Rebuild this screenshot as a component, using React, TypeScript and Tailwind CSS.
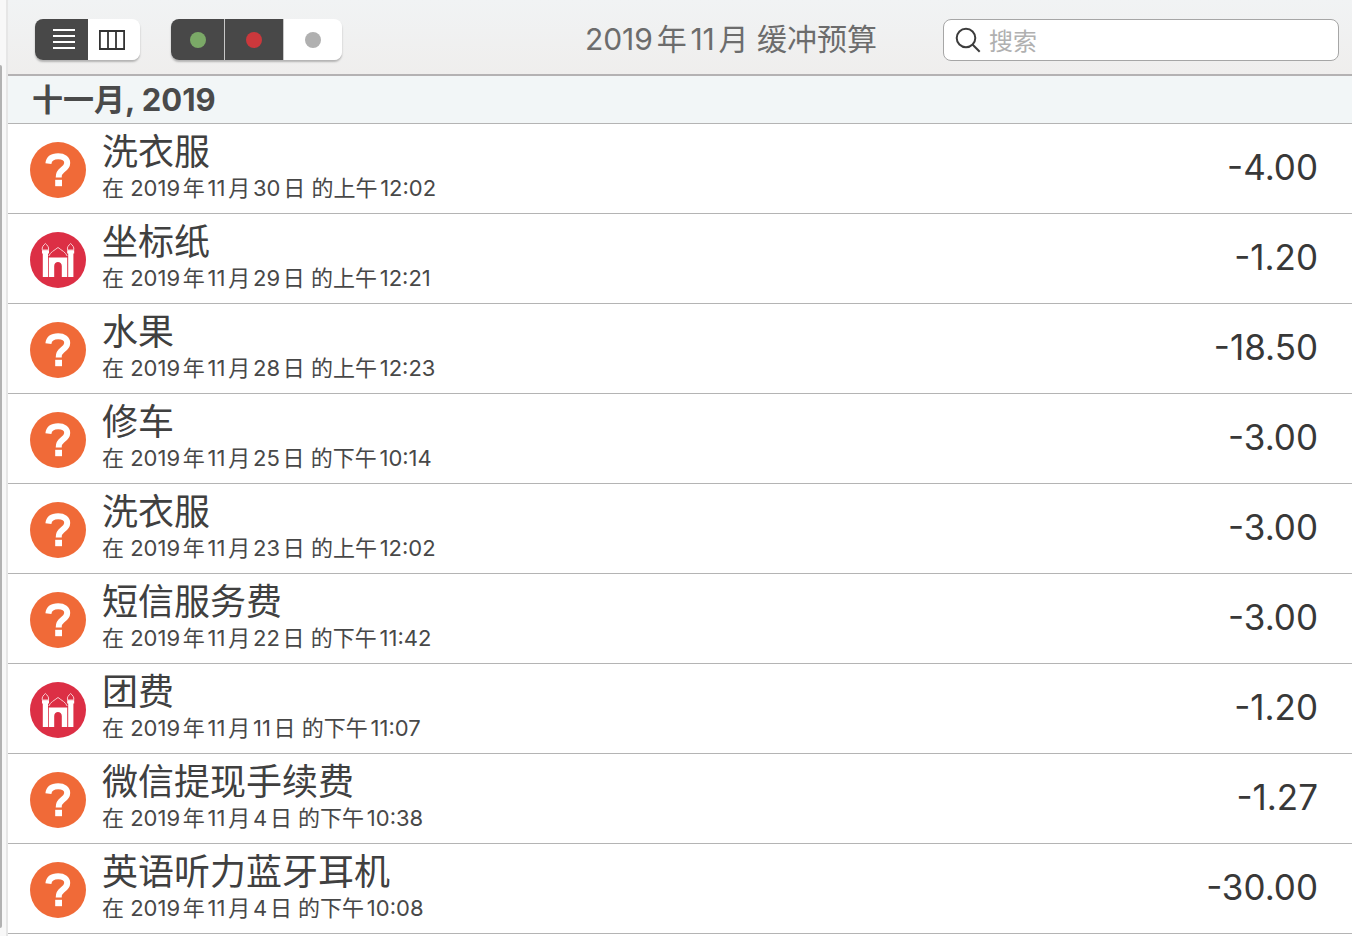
import { useState } from "react";

type Kind = "unknown" | "education";

interface Entry {
  id: number;
  kind: Kind;
  title: string;
  date: string;
  amount: string;
}

const entries: Entry[] = [
  { id: 1, kind: "unknown", title: "洗衣服", date: "在 2019年11月30日 的上午12:02", amount: "-4.00" },
  { id: 2, kind: "education", title: "坐标纸", date: "在 2019年11月29日 的上午12:21", amount: "-1.20" },
  { id: 3, kind: "unknown", title: "水果", date: "在 2019年11月28日 的上午12:23", amount: "-18.50" },
  { id: 4, kind: "unknown", title: "修车", date: "在 2019年11月25日 的下午10:14", amount: "-3.00" },
  { id: 5, kind: "unknown", title: "洗衣服", date: "在 2019年11月23日 的上午12:02", amount: "-3.00" },
  { id: 6, kind: "unknown", title: "短信服务费", date: "在 2019年11月22日 的下午11:42", amount: "-3.00" },
  { id: 7, kind: "education", title: "团费", date: "在 2019年11月11日 的下午11:07", amount: "-1.20" },
  { id: 8, kind: "unknown", title: "微信提现手续费", date: "在 2019年11月4日 的下午10:38", amount: "-1.27" },
  { id: 9, kind: "unknown", title: "英语听力蓝牙耳机", date: "在 2019年11月4日 的下午10:08", amount: "-30.00" },
];

function QuestionIcon() {
  return (
    <svg viewBox="0 0 56 56" className="size-14 shrink-0" aria-hidden="true">
      <circle cx="28" cy="28" r="28" fill="#f06a38" />
      <path
        d="M18.4 21.6C18.9 16.6 22.8 14.3 28.2 14.3C33.8 14.3 37.2 17 37.2 21C37.2 24.4 35 26.2 32.4 28C29.6 30 28.7 31.6 28.7 35.4"
        fill="none"
        stroke="#fff"
        strokeWidth="6"
      />
      <rect x="25.2" y="37.8" width="6.8" height="6.4" fill="#fff" />
    </svg>
  );
}

function CastleIcon() {
  return (
    <svg viewBox="0 0 56 56" className="size-14 shrink-0" aria-hidden="true">
      <circle cx="28" cy="28" r="28" fill="#dc2f45" />
      <g fill="none" stroke="#f9ced3" strokeWidth="1">
        <path d="M12.3 18C11.6 15 13.4 13.4 15.4 11.5C17.4 13.4 19.2 15 18.5 18Z" />
        <path d="M37.5 18C36.8 15 38.6 13.4 40.6 11.5C42.6 13.4 44.4 15 43.7 18Z" />
        <path d="M18.8 24C20.5 20 24 18.7 28 15.5C32 18.7 35.5 20 37.2 24" />
      </g>
      <g fill="#fff">
        <path d="M12 18.2h7v3.3h-1V45h-5.2V21.5H12Z" />
        <path d="M37.2 18.2h7v3.3h-.8V45h-5.2V21.5h-1Z" />
        <path d="M18.8 25.5h18.4V45h-5.4V34c0-5.2-7.6-5.2-7.6 0v11h-5.4Z" />
      </g>
    </svg>
  );
}

function EntryRow({ entry }: { entry: Entry }) {
  return (
    <li className="flex h-[90px] items-center gap-4 border-b border-[#b4b4b4] bg-white pt-[2px] pr-[34px] pl-[22px]">
      {entry.kind === "unknown" ? <QuestionIcon /> : <CastleIcon />}
      <div className="min-w-0 flex-1 pb-2">
        <h3 className="truncate text-[36px] leading-[44px] text-[#404040]">{entry.title}</h3>
        <p className="truncate text-[22px] leading-[28px] text-[#484848]">{entry.date}</p>
      </div>
      <span className="pb-[6px] text-[35px] leading-[44px] text-[#383838]">{entry.amount}</span>
    </li>
  );
}

const statusFilters = [
  { key: "income", label: "收入", dot: "bg-[#7ba967]", width: "w-[54px]" },
  { key: "expense", label: "支出", dot: "bg-[#cb383c]", width: "w-[59px]" },
  { key: "other", label: "其他", dot: "bg-[#b0b0b0]", width: "w-[58px]" },
];

export default function App() {
  const [view, setView] = useState("list");
  const [active, setActive] = useState<string[]>(["income", "expense"]);
  const toggle = (key: string) =>
    setActive((keys) => (keys.includes(key) ? keys.filter((k) => k !== key) : [...keys, key]));
  const tone = (on: boolean) => (on ? "bg-[#484848] text-white" : "bg-white text-[#333]");

  return (
    <div className="flex min-h-screen bg-white font-['Inter','Noto_Sans_CJK_SC',sans-serif] [text-autospace:normal]">
      <div className="flex w-2 shrink-0 border-r-2 border-[#e6e6e6] bg-[#f8f8f8] pt-[65px] pb-2">
        <div className="w-[2px] rounded-r-full bg-[#b2b2b2]" />
      </div>
      <main className="min-w-0 flex-1">
        <header className="flex h-[76px] items-start border-b-2 border-[#b4b2b3] bg-linear-to-b from-[#f1f3f4] to-[#efeeed] pt-[19px] pr-[13px] pl-[27px]">
          <div className="flex h-[41px] w-[105px] overflow-hidden rounded-lg shadow-[0_2px_2px_rgba(0,0,0,0.25)]">
            <button
              aria-label="列表"
              aria-pressed={view === "list"}
              onClick={() => setView("list")}
              className={`flex w-[53px] items-center justify-center pl-1 ${tone(view === "list")}`}
            >
              <svg width="24" height="22" viewBox="0 0 24 22" stroke="currentColor" strokeWidth="2">
                <path d="M1 1h22M1 7h22M1 13h22M1 19h22" />
              </svg>
            </button>
            <button
              aria-label="分栏"
              aria-pressed={view === "columns"}
              onClick={() => setView("columns")}
              className={`flex flex-1 items-center pl-[11px] ${tone(view === "columns")}`}
            >
              <svg width="26" height="20" viewBox="0 0 26 20" fill="none" stroke="currentColor" strokeWidth="1.8">
                <path d="M.9 1h24.2v18H.9ZM9 1v18M17 1v18" />
              </svg>
            </button>
          </div>

          <div className="ml-[31px] flex h-[41px] overflow-hidden rounded-lg shadow-[0_2px_2px_rgba(0,0,0,0.25)]">
            {statusFilters.map((f) => (
              <button
                key={f.key}
                aria-label={f.label}
                aria-pressed={active.includes(f.key)}
                onClick={() => toggle(f.key)}
                className={`flex items-center justify-center border-r border-[#c8c8c8] last:border-r-0 ${f.width} ${tone(active.includes(f.key))}`}
              >
                <span className={`size-4 rounded-full ${f.dot}`} />
              </button>
            ))}
          </div>

          <h1 className="flex-1 pr-[66px] text-right text-[30px] leading-[40px] whitespace-nowrap text-[#6c6c6c]">
            2019年11月 缓冲预算
          </h1>

          <label className="flex h-[42px] w-[396px] items-center gap-2 rounded-lg border border-[#a6a6a6] bg-white px-[11px]">
            <svg width="26" height="26" viewBox="0 0 26 26" fill="none" stroke="#3c3c3c" strokeWidth="2" aria-hidden="true">
              <circle cx="11" cy="11" r="9.3" />
              <path d="M17.5 17.5l7.2 7.2" />
            </svg>
            <input
              type="text"
              aria-label="搜索"
              placeholder="搜索"
              className="min-w-0 flex-1 bg-transparent pt-1 text-2xl leading-8 text-[#404040] outline-none placeholder:text-[#b0b0b0]"
            />
          </label>
        </header>

        <section>
          <h2 className="h-12 border-b border-[#b4b4b4] bg-[#f2f6f7] pl-6 text-[31px] leading-[48px] font-bold text-[#4a4a4a]">
            十一月, 2019
          </h2>
          <ul>
            {entries.map((e) => (
              <EntryRow key={e.id} entry={e} />
            ))}
          </ul>
        </section>
      </main>
    </div>
  );
}
